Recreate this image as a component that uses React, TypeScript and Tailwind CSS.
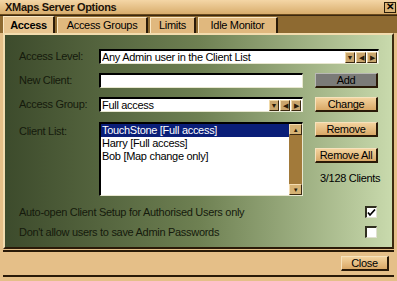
import React from 'react';

const font = { fontFamily: '"Liberation Sans", Arial, sans-serif' };

function MiniBtn({ glyph }: { glyph: string }) {
  return (
    <div className="w-[10px] h-[11px] shrink-0 bg-[#c9a56c] border border-t-[#f0d9a8] border-l-[#f0d9a8] border-r-[#3a2810] border-b-[#3a2810] flex items-center justify-center text-[7px] leading-none text-[#2a1c08] tracking-normal">
      {glyph}
    </div>
  );
}

function Dropdown({ value, width }: { value: string; width: string }) {
  return (
    <div className={`${width} shrink-0 h-[15px] bg-white border-t-2 border-l-2 border-t-black border-l-black border-b border-r border-b-[#e8e8d0] border-r-[#e8e8d0] flex items-center pl-[1px] pr-[1px]`}>
      <span className="flex-1 leading-none text-black whitespace-nowrap overflow-hidden">{value}</span>
      <div className="flex gap-[1px]">
        <MiniBtn glyph="▼" />
        <MiniBtn glyph="◀" />
        <MiniBtn glyph="▶" />
      </div>
    </div>
  );
}

function TanButton({ label, gray, w = 'w-[63px]' }: { label: string; gray?: boolean; w?: string }) {
  return (
    <div
      className={`${w} shrink-0 h-[15px] flex items-center justify-center text-[11px] leading-none text-black whitespace-nowrap border border-r-2 border-b-2 border-r-[#2a1a08] border-b-[#2a1a08] ${
        gray ? 'bg-[#7b7b78] border-t-[#b8b8b4] border-l-[#b8b8b4]' : 'bg-gradient-to-b from-[#f3d39e] to-[#d9a866] border-t-[#f6e2bc] border-l-[#f6e2bc]'
      }`}
    >
      {label}
    </div>
  );
}

function Checkbox({ checked }: { checked?: boolean }) {
  return (
    <div className="w-[12px] h-[12px] shrink-0 bg-white border-t-2 border-l-2 border-t-[#303020] border-l-[#303020] border-b border-r border-b-[#e0e0d0] border-r-[#e0e0d0] flex items-center justify-center">
      {checked && (
        <svg width="9" height="8" viewBox="0 0 9 8">
          <path d="M1 3.5 L3 6 L8 0.5" stroke="#000" strokeWidth="1.7" fill="none" />
        </svg>
      )}
    </div>
  );
}

export default function App() {
  const tabs = [
    { name: 'Access', w: 'w-[52px]', active: true },
    { name: 'Access Groups', w: 'w-[91px]' },
    { name: 'Limits', w: 'w-[46px]' },
    { name: 'Idle Monitor', w: 'w-[80px]' },
  ];

  return (
    <div className="w-[397px] h-[281px] bg-[#e5bf88] overflow-hidden text-[11px] tracking-[-0.3px]" style={font}>
      {/* Title bar */}
      <div className="h-[15px] bg-gradient-to-b from-[#f4d6a6] to-[#d8ad6c] flex items-center justify-between pl-[5px] pr-[1px] border-b border-[#6a4a1c]">
        <span className="font-bold leading-none text-[#1c1208]">XMaps Server Options</span>
        <div className="w-[12px] h-[11px] bg-[#d9b476] border border-[#2a1c08] flex items-center justify-center text-[10px] font-bold leading-none text-black">✕</div>
      </div>

      {/* Tab strip */}
      <div className="h-[18px] bg-[#8e6a31] flex items-end gap-[2px] pl-[3px] border-t border-[#3a2810]">
        {tabs.map((t) => (
          <div
            key={t.name}
            className={`${t.w} flex items-center justify-center leading-none text-black border-t border-l border-r-2 border-t-[#fbe8c4] border-l-[#fbe8c4] border-r-[#2a1a08] ${
              t.active ? 'bg-[#e8c590] font-bold h-[17px]' : 'bg-[#e0b87e] h-[16px]'
            }`}
          >
            {t.name}
          </div>
        ))}
      </div>

      {/* Panel */}
      <div className="mx-[3px] h-[216px] border-t-2 border-t-[#f2dcae] border-l-2 border-l-[#f2dcae] border-r-2 border-r-[#3a2a10] border-b-2 border-b-[#2a1a08] bg-gradient-to-r from-[#3d4b2c] via-[#6e8052] to-[#c9daad] pl-[14px] pr-[12px] pt-[14px] leading-none text-[#151a0c]">
        <div className="flex items-center h-[15px]">
          <span className="w-[80px] shrink-0">Access Level:</span>
          <Dropdown value="Any Admin user in the Client List" width="w-[280px]" />
        </div>

        <div className="flex items-center h-[15px] mt-[9px]">
          <span className="w-[80px] shrink-0">New Client:</span>
          <div className="w-[204px] shrink-0 h-[15px] bg-white border-t-2 border-l-2 border-t-black border-l-black border-b border-r border-b-[#e8e8d0] border-r-[#e8e8d0]" />
          <div className="ml-[12px]">
            <TanButton label="Add" gray />
          </div>
        </div>

        <div className="flex items-center h-[15px] mt-[9px]">
          <span className="w-[80px] shrink-0">Access Group:</span>
          <Dropdown value="Full access" width="w-[204px]" />
          <div className="ml-[12px]">
            <TanButton label="Change" />
          </div>
        </div>

        <div className="flex items-start mt-[10px]">
          <span className="w-[80px] shrink-0 pt-[4px]">Client List:</span>
          <div className="w-[204px] shrink-0 h-[74px] bg-white border-t-2 border-l-2 border-t-black border-l-black border-b border-r border-b-[#e8e8d0] border-r-[#e8e8d0] flex">
            <div className="flex-1 text-black">
              <div className="h-[13px] bg-[#0a1e78] text-white flex items-center pl-[1px]">TouchStone [Full access]</div>
              <div className="h-[13px] flex items-center pl-[1px]">Harry [Full access]</div>
              <div className="h-[13px] flex items-center pl-[1px]">Bob [Map change only]</div>
            </div>
            <div className="w-[13px] bg-[#a27a3a] flex flex-col justify-between">
              <div className="h-[11px] bg-[#d6b274] border border-t-[#f4dcb0] border-l-[#f4dcb0] border-r-[#3a2810] border-b-[#3a2810] flex items-center justify-center text-[6px] text-[#2a1c08]">▲</div>
              <div className="h-[11px] bg-[#d6b274] border border-t-[#f4dcb0] border-l-[#f4dcb0] border-r-[#3a2810] border-b-[#3a2810] flex items-center justify-center text-[6px] text-[#2a1c08]">▼</div>
            </div>
          </div>
          <div className="ml-[12px] flex flex-col shrink-0">
            <TanButton label="Remove" />
            <div className="mt-[11px]">
              <TanButton label="Remove All" />
            </div>
            <span className="mt-[10px] pl-[5px] text-black whitespace-nowrap">3/128 Clients</span>
          </div>
        </div>

        <div className="flex items-center justify-between mt-[10px] pr-[3px]">
          <span>Auto-open Client Setup for Authorised Users only</span>
          <Checkbox checked />
        </div>
        <div className="flex items-center justify-between mt-[8px] pr-[3px]">
          <span>Don't allow users to save Admin Passwords</span>
          <Checkbox />
        </div>
      </div>

      {/* Bottom bar */}
      <div className="mx-[3px] mt-[1px] h-[27px] border-t-2 border-b-2 border-[#2a1a08] flex items-center justify-end pr-[5px]">
        <TanButton label="Close" w="w-[48px]" />
      </div>
    </div>
  );
}
